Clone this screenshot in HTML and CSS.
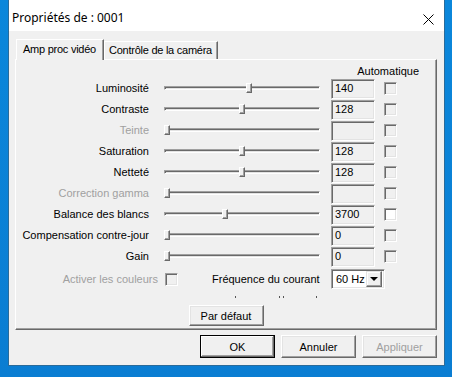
FILE: index.html
```html
<!DOCTYPE html>
<html lang="fr">
<head>
    <meta charset="UTF-8">
    <title>Propriétés de : 0001</title>
    <link rel="stylesheet" href="styles.css">
</head>
<body>
    <div class="window">
        <div class="titlebar">
            <span class="title">Propriétés de : 0001</span>
            <svg class="close" width="11" height="11" viewBox="0 0 11 11">
                <path d="M0.5 0.5 L10.5 10.5 M10.5 0.5 L0.5 10.5" stroke="#000" stroke-width="1" fill="none"/>
            </svg>
        </div>

        <div class="client">
            <!-- Tabs -->
            <div class="tabs">
                <div class="tab active">Amp proc vidéo</div>
                <div class="tab second">Contrôle de la caméra</div>
            </div>

            <div class="panel">
                <div class="auto-head">Automatique</div>

                <div class="grid">
                    <div class="label">Luminosité</div>
                    <div class="slider"><div class="track"></div><div class="thumb" style="left: 82px"></div></div>
                    <div class="edit">140</div>
                    <div class="check"></div>

                    <div class="label">Contraste</div>
                    <div class="slider"><div class="track"></div><div class="thumb" style="left: 75px"></div></div>
                    <div class="edit">128</div>
                    <div class="check"></div>

                    <div class="label disabled">Teinte</div>
                    <div class="slider"><div class="track"></div><div class="thumb" style="left: 0px"></div></div>
                    <div class="edit"></div>
                    <div class="check"></div>

                    <div class="label">Saturation</div>
                    <div class="slider"><div class="track"></div><div class="thumb" style="left: 75px"></div></div>
                    <div class="edit">128</div>
                    <div class="check"></div>

                    <div class="label">Netteté</div>
                    <div class="slider"><div class="track"></div><div class="thumb" style="left: 75px"></div></div>
                    <div class="edit">128</div>
                    <div class="check"></div>

                    <div class="label disabled">Correction gamma</div>
                    <div class="slider"><div class="track"></div><div class="thumb" style="left: 0px"></div></div>
                    <div class="edit"></div>
                    <div class="check"></div>

                    <div class="label">Balance des blancs</div>
                    <div class="slider"><div class="track"></div><div class="thumb" style="left: 58px"></div></div>
                    <div class="edit">3700</div>
                    <div class="check enabled"></div>

                    <div class="label">Compensation contre-jour</div>
                    <div class="slider"><div class="track"></div><div class="thumb" style="left: 0px"></div></div>
                    <div class="edit">0</div>
                    <div class="check"></div>

                    <div class="label">Gain</div>
                    <div class="slider"><div class="track"></div><div class="thumb" style="left: 0px"></div></div>
                    <div class="edit">0</div>
                    <div class="check"></div>
                </div>

                <div class="extra-row">
                    <div class="act-label disabled">Activer les couleurs</div>
                    <div class="check small"></div>
                    <div class="freq-label">Fréquence du courant</div>
                    <div class="combo">
                        <span class="combo-text">60 Hz</span>
                        <span class="combo-btn"><span class="arrow"></span></span>
                    </div>
                </div>

                <!-- text cut off under the row above -->
                <div class="clipped">
                    <span class="mark m1"></span>
                    <span class="mark m2"></span>
                    <span class="mark m3"></span>
                    <span class="mark m4"></span>
                </div>

                <div class="default-row">
                    <button class="btn">Par défaut</button>
                </div>
            </div>

            <div class="dialog-buttons">
                <button class="btn default">OK</button>
                <button class="btn">Annuler</button>
                <button class="btn disabled">Appliquer</button>
            </div>
        </div>
    </div>
</body>
</html>
```

FILE: styles.css
```css
* {
    box-sizing: border-box;
}
html, body {
    margin: 0;
    height: 100%;
}
body {
    background: linear-gradient(#0b87db, #0a7dd2);
    font-family: "Liberation Sans", Arial, sans-serif;
    font-size: 11px;
    color: #000;
    overflow: hidden;
}
.window {
    margin-left: 8px;
    width: 437px;
    height: 366px;
    background: #f0f0f0;
    border: 1px solid #2a6b9a;
    border-top: none;
}
.titlebar {
    height: 31px;
    background: #fff;
    display: flex;
    justify-content: space-between;
    padding: 0 10px 0 3px;
}
.title {
    font-family: "Noto Sans", sans-serif;
    font-size: 12px;
    line-height: 16px;
    margin-top: 10px;
}
.close {
    margin-top: 14px;
}
.client {
    padding: 8px 7px 0 6px;
}

/* Tabs */
.tabs {
    display: flex;
    align-items: flex-start;
    height: 20px;
    padding-left: 1px;
    position: relative;
    z-index: 1;
}
.tab {
    height: 18px;
    margin-top: 2px;
    padding-left: 4px;
    line-height: 17px;
    letter-spacing: -0.25px;
    border: 1px solid #fff;
    border-bottom: none;
    border-right-color: #696969;
    box-shadow: inset -1px 0 #a0a0a0;
    background: #f0f0f0;
    white-space: nowrap;
}
.tab.active {
    width: 88px;
    height: 21px;
    margin-top: 0;
    padding-left: 6px;
    line-height: 19px;
}
.tab.second {
    width: 114px;
}

/* Panel */
.panel {
    height: 271px;
    border: 1px solid #fff;
    border-right-color: #696969;
    border-bottom-color: #696969;
    box-shadow: inset -1px -1px #a0a0a0;
}
.auto-head {
    height: 19px;
    padding: 5px 17px 0 0;
    line-height: 13px;
    text-align: right;
}
.grid {
    display: grid;
    grid-template-columns: 134px 170px 55px 22px;
    grid-auto-rows: 21px;
}
.label {
    margin-top: 2px;
    padding-right: 1px;
    line-height: 14px;
    text-align: right;
    white-space: nowrap;
}
.disabled {
    color: #a0a0a0;
}
.slider {
    position: relative;
    width: 156px;
    height: 10px;
    margin: 4px 0 0 14px;
}
.track {
    height: 4px;
    margin-top: 3px;
    border: 1px solid #a0a0a0;
    border-right-color: #fff;
    border-bottom-color: #fff;
    box-shadow: inset 1px 1px #696969, inset -1px -1px #e3e3e3;
}
.thumb {
    position: absolute;
    top: 0;
    width: 6px;
    height: 10px;
    background: #f0f0f0;
    border: 1px solid #fff;
    border-right-color: #696969;
    border-bottom-color: #696969;
    box-shadow: inset -1px -1px #a0a0a0;
}
.edit {
    width: 44px;
    height: 20px;
    margin-left: 11px;
    padding-left: 3px;
    line-height: 16px;
    border: 1px solid #a0a0a0;
    border-right-color: #fff;
    border-bottom-color: #fff;
    box-shadow: inset 1px 1px #696969, inset -1px -1px #e3e3e3;
}
.check {
    width: 13px;
    height: 13px;
    margin: 3px 0 0 9px;
    background: #f0f0f0;
    border: 1px solid #a0a0a0;
    border-right-color: #fff;
    border-bottom-color: #fff;
    box-shadow: inset 1px 1px #696969, inset -1px -1px #e3e3e3;
}
.check.enabled {
    background: #fff;
}
.check.small {
    margin: 0 0 0 7px;
}

/* Bottom row */
.extra-row {
    display: flex;
    align-items: center;
    height: 20px;
    margin-top: 1px;
}
.act-label {
    width: 142px;
    text-align: right;
    white-space: nowrap;
}
.freq-label {
    width: 119px;
    margin-left: 34px;
    white-space: nowrap;
}
.combo {
    display: flex;
    width: 54px;
    height: 20px;
    background: #fff;
    border: 1px solid #a0a0a0;
    border-right-color: #fff;
    border-bottom-color: #fff;
    box-shadow: inset 1px 1px #696969, inset -1px -1px #e3e3e3;
    padding: 2px 2px 2px 4px;
}
.combo-text {
    flex: 1;
    line-height: 15px;
}
.combo-btn {
    width: 16px;
    height: 16px;
    margin-top: -1px;
    display: flex;
    align-items: center;
    justify-content: center;
    background: #f0f0f0;
    border: 1px solid #e3e3e3;
    border-right-color: #696969;
    border-bottom-color: #696969;
    box-shadow: inset -1px -1px #a0a0a0, inset 1px 1px #fff;
}
.arrow {
    width: 0;
    height: 0;
    border-left: 4px solid transparent;
    border-right: 4px solid transparent;
    border-top: 4px solid #000;
}
.clipped {
    display: flex;
    height: 3px;
    margin-top: 7px;
}
.mark {
    width: 1px;
    height: 2px;
    background: #555;
}
.m1 {
    margin-left: 219px;
}
.m2 {
    margin-left: 43px;
}
.m3 {
    margin-left: 3px;
}
.m4 {
    margin-left: 32px;
}
.default-row {
    display: flex;
    justify-content: center;
    margin-top: 6px;
}

/* Buttons */
.btn {
    width: 75px;
    height: 21px;
    padding: 0;
    font-family: inherit;
    font-size: 11px;
    color: #000;
    background: #f0f0f0;
    border: 1px solid #fff;
    border-right-color: #696969;
    border-bottom-color: #696969;
    box-shadow: inset -1px -1px #a0a0a0, inset 1px 1px #e3e3e3;
}
.btn.disabled {
    color: #a0a0a0;
}
.btn.default {
    border: 1px solid #000;
    box-shadow: inset -1px -1px #696969, inset 1px 1px #fff, inset -2px -2px #a0a0a0;
}
.dialog-buttons {
    display: flex;
    justify-content: flex-end;
    gap: 6px;
    margin-top: 5px;
}
.dialog-buttons .btn {
    height: 23px;
}
```
